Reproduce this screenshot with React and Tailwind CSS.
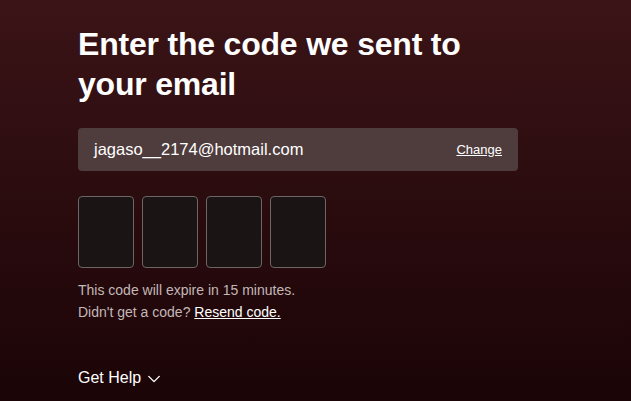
import { useState } from "react";

const CODE_LENGTH = 4;

const ChevronDown = () => (
    <svg width="14" height="14" viewBox="0 0 16 16" fill="none" className="ml-[6px] mt-[1px]">
        <path d="M2 5l6 6 6-6" stroke="currentColor" strokeWidth="1.6" strokeLinecap="round" strokeLinejoin="round" />
    </svg>
);

const CodeInput = () => {
    const [digits, setDigits] = useState(Array(CODE_LENGTH).fill(""));

    const handleChange = (index, value) => {
        const next = [...digits];
        next[index] = value.slice(-1);
        setDigits(next);
    };

    return (
        <div className="flex gap-2">
            {digits.map((digit, index) => (
                <input
                    key={index}
                    type="text"
                    inputMode="numeric"
                    value={digit}
                    onChange={(e) => handleChange(index, e.target.value)}
                    className="w-[56px] h-[72px] rounded-[4px] border border-[#6e6565] bg-[#1b1414] text-center text-2xl text-white focus:outline-none"
                />
            ))}
        </div>
    );
};

export default function App() {
    return (
        <div className="h-[401px] w-full overflow-hidden bg-gradient-to-b from-[#3b1417] to-[#1b0507] font-['Liberation_Sans',Arial,sans-serif] text-white">
            <div className="pl-[78px] pt-[24px]">
                <h1 className="w-[440px] text-[32px] leading-[40px] font-bold tracking-[-0.2px]">Enter the code we sent to your email</h1>

                <div className="mt-[24px] flex h-[43px] w-[440px] items-center justify-between rounded-[4px] bg-[#4f3c3d] pl-4 pr-4">
                    <span className="text-[16.5px]">jagaso__2174@hotmail.com</span>
                    <button className="text-[13px] font-medium underline">Change</button>
                </div>

                <div className="mt-[25px]">
                    <CodeInput />
                </div>

                <p className="mt-[11px] text-sm leading-[22px] text-[#c2b8b8]">This code will expire in 15 minutes.</p>
                <p className="text-sm leading-[22px] text-[#c2b8b8]">
                    Didn't get a code?{" "}
                    <button className="font-medium text-white underline">Resend code.</button>
                </p>

                <button className="mt-[43px] flex items-center text-base">
                    Get Help
                    <ChevronDown />
                </button>
            </div>
        </div>
    );
}
